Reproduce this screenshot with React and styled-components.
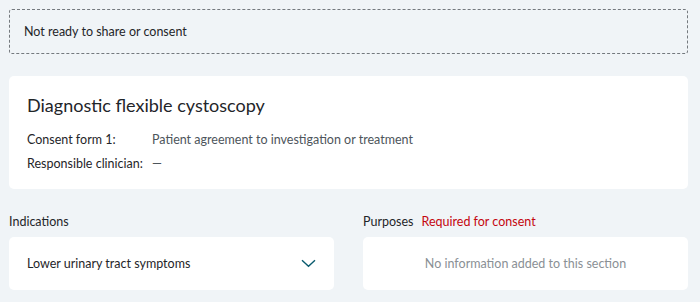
import React from 'react';
import styled, { createGlobalStyle } from 'styled-components';

const GlobalStyle = createGlobalStyle`
  html, body {
    margin: 0;
    padding: 0;
    background: #f0f4f7;
    font-family: Lato, "Open Sans", sans-serif;
    color: #1f2529;
  }
`;

const Page = styled.div`
  padding: 9px 12px 12px 9px;
  display: flex;
  flex-direction: column;
`;

const Notice = styled.div`
  height: 45px;
  box-sizing: border-box;
  border: 1px dashed #74797e;
  border-radius: 3px;
  display: flex;
  align-items: center;
  padding: 0 14px;
  font-size: 12.5px;
`;

const Card = styled.div`
  background: #fff;
  border-radius: 5px;
  box-sizing: border-box;
`;

const Summary = styled(Card)`
  margin-top: 22px;
  height: 113px;
  padding: 17px 18px;
`;

const Title = styled.h1`
  margin: 0 0 15px;
  font-size: 18px;
  font-weight: 400;
  line-height: 24px;
`;

const Details = styled.dl`
  margin: 0;
  display: grid;
  grid-template-columns: 125px 1fr;
  row-gap: 8px;
  font-size: 12.5px;
  line-height: 16px;
`;

const Term = styled.dt`
  margin: 0;
  white-space: nowrap;
`;

const Value = styled.dd`
  margin: 0;
  color: #4d555b;
`;

const Columns = styled.div`
  margin-top: 25px;
  display: grid;
  grid-template-columns: 1fr 1fr;
  column-gap: 29px;
`;

const Section = styled.section`
  display: flex;
  flex-direction: column;
`;

const Label = styled.div`
  font-size: 12.5px;
  line-height: 16px;
  margin-bottom: 7px;
  display: flex;
  gap: 8px;
`;

const Required = styled.span`
  color: #c4050f;
`;

const Box = styled(Card)`
  height: 53px;
  display: flex;
  align-items: center;
  justify-content: ${p => (p.$empty ? 'center' : 'space-between')};
  padding: 0 18px;
  font-size: 12.5px;
  color: ${p => (p.$empty ? '#8a9095' : '#1f2529')};
`;

const Chevron = () => (
  <svg width="15" height="9" viewBox="0 0 15 9" fill="none">
    <path d="M1 1.2 L7.5 7.2 L14 1.2" stroke="#0a5b6e" strokeWidth="1.4" />
  </svg>
);

export default function App() {
  return (
    <Page>
      <GlobalStyle />
      <Notice>Not ready to share or consent</Notice>
      <Summary>
        <Title>Diagnostic flexible cystoscopy</Title>
        <Details>
          <Term>Consent form 1:</Term>
          <Value>Patient agreement to investigation or treatment</Value>
          <Term>Responsible clinician:</Term>
          <Value>—</Value>
        </Details>
      </Summary>
      <Columns>
        <Section>
          <Label>Indications</Label>
          <Box>
            Lower urinary tract symptoms
            <Chevron />
          </Box>
        </Section>
        <Section>
          <Label>
            Purposes <Required>Required for consent</Required>
          </Label>
          <Box $empty>No information added to this section</Box>
        </Section>
      </Columns>
    </Page>
  );
}
